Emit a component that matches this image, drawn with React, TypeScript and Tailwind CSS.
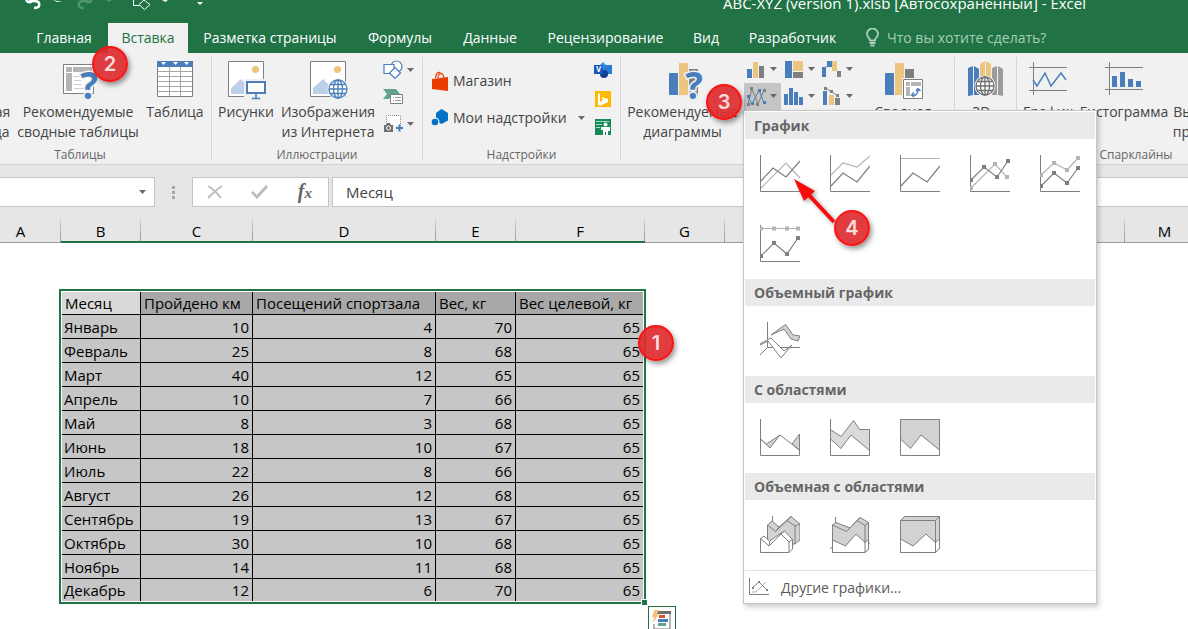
import React from 'react';

type Cell = string | number;

const tabs = [
  { label: 'Главная', width: 'w-[88px]' },
  { label: 'Вставка', width: 'w-[80px]', active: true },
  { label: 'Разметка страницы', width: 'w-[164px]' },
  { label: 'Формулы', width: 'w-[96px]' },
  { label: 'Данные', width: 'w-[84px]' },
  { label: 'Рецензирование', width: 'w-[147px]' },
  { label: 'Вид', width: 'w-[54px]' },
  { label: 'Разработчик', width: 'w-[119px]' },
];

const columns = [
  { name: 'A', width: 'w-20' },
  { name: 'B', width: 'w-20', selected: true },
  { name: 'C', width: 'w-28', selected: true },
  { name: 'D', width: 'w-[183px]', selected: true },
  { name: 'E', width: 'w-20', selected: true },
  { name: 'F', width: 'w-[129px]', selected: true },
  { name: 'G', width: 'w-20' },
  { name: 'H', width: 'w-20' },
  { name: 'I', width: 'w-20' },
  { name: 'J', width: 'w-20' },
  { name: 'K', width: 'w-20' },
  { name: 'L', width: 'w-20' },
  { name: 'M', width: 'w-20' },
];

const headers = ['Месяц', 'Пройдено км', 'Посещений спортзала', 'Вес, кг', 'Вес целевой, кг'];

const rows: Cell[][] = [
  ['Январь', 10, 4, 70, 65],
  ['Февраль', 25, 8, 68, 65],
  ['Март', 40, 12, 65, 65],
  ['Апрель', 10, 7, 66, 65],
  ['Май', 8, 3, 68, 65],
  ['Июнь', 18, 10, 67, 65],
  ['Июль', 22, 8, 66, 65],
  ['Август', 26, 12, 68, 65],
  ['Сентябрь', 19, 13, 67, 65],
  ['Октябрь', 30, 10, 68, 65],
  ['Ноябрь', 14, 11, 68, 65],
  ['Декабрь', 12, 6, 70, 65],
];

const BLUE = '#4a7ebb';
const GOLD = '#ecc580';
const GRAY = '#7f7f7f';
const LIGHT = '#b4b4b4';

/* ---------- shared bits ---------- */

function Caret({ className = 'text-[#6a6a6a]' }: { className?: string }) {
  return (
    <svg width="7" height="4" viewBox="0 0 7 4" className={`shrink-0 ${className}`}>
      <path d="M0 0h7L3.5 4z" fill="currentColor" />
    </svg>
  );
}

function Step({ n, className }: { n: number; className: string }) {
  return (
    <div
      className={`absolute z-40 flex size-9 items-center justify-center rounded-full border-2 border-[#fb1414] bg-[#de2b2f]/92 font-['Inter','Liberation_Sans',sans-serif] text-[20px] font-semibold text-[#fbdcdc] shadow-[2px_3px_5px_rgba(0,0,0,0.4)] ${className}`}
    >
      {n}
    </div>
  );
}

function Globe({ cx, cy, r, color, bg }: { cx: number; cy: number; r: number; color: string; bg: string }) {
  return (
    <g fill="none" stroke={color} strokeWidth="1.3">
      <circle cx={cx} cy={cy} r={r + 1.5} fill={bg} stroke="none" />
      <circle cx={cx} cy={cy} r={r} fill="#fff" />
      <ellipse cx={cx} cy={cy} rx={r / 2} ry={r} />
      <path d={`M${cx} ${cy - r}v${2 * r}M${cx - r} ${cy}h${2 * r}M${cx - r * 0.85} ${cy - r / 2}h${r * 1.7}M${cx - r * 0.85} ${cy + r / 2}h${r * 1.7}`} />
    </g>
  );
}

function Question() {
  return (
    <text
      x="31"
      y="39"
      textAnchor="middle"
      fontSize="37"
      fontWeight="700"
      fill={BLUE}
      stroke="#f1f1f1"
      strokeWidth="3"
      paintOrder="stroke"
      fontFamily="'Open Sans', sans-serif"
    >
      ?
    </text>
  );
}

/* ---------- large ribbon icons ---------- */

function RecommendedPivotIcon() {
  return (
    <svg width="40" height="40" viewBox="0 0 40 40">
      <path d="M5.5 4.5h30v29h-30z" fill="#fff" stroke={GRAY} />
      <path d="M8 7h6v5H8zM15 7h19v5H15zM8 13h6v18H8z" fill={LIGHT} />
      <path d="M16 16.5h8M16 20.5h7M16 24.5h8M16 28.5h10" stroke="#cfcfcf" />
      <Question />
    </svg>
  );
}

function TableIcon() {
  return (
    <svg width="40" height="40" viewBox="0 0 40 40">
      <path d="M2.5 1.5h35v35h-35z" fill="#fff" stroke={GRAY} />
      <path d="M3 11.5h34M3 16.5h34M3 21.5h34M3 26.5h34M3 31.5h34M14.5 7v29M25.5 7v29" stroke="#a6a6a6" />
      <path d="M2 1h36v6H2z" fill={BLUE} />
      <path d="M6 2h5l-2.5 3zM18 2h5l-2.5 3zM29 2h5l-2.5 3z" fill="#fff" />
    </svg>
  );
}

function PictureBase() {
  return (
    <>
      <path d="M2.5 1.5h35v35h-35z" fill="#fff" stroke={GRAY} />
      <circle cx="29.5" cy="9.5" r="3.6" fill="#efc57b" />
      <path d="M5 34v-6l10-9 12 12v3z" fill="#bdd0e8" />
    </>
  );
}

function PicturesIcon() {
  return (
    <svg width="40" height="40" viewBox="0 0 40 40">
      <PictureBase />
      <path d="M18 19h22v21H18z" fill="#f1f1f1" />
      <path d="M21 22h18v11H21z" fill="#fff" stroke={BLUE} strokeWidth="2" />
      <path d="M30 34v4M26 38.5h8" stroke={BLUE} strokeWidth="1.5" />
    </svg>
  );
}

function OnlinePicturesIcon() {
  return (
    <svg width="40" height="40" viewBox="0 0 40 40">
      <PictureBase />
      <Globe cx={30} cy={29} r={9} color={BLUE} bg="#f1f1f1" />
    </svg>
  );
}

function RecommendedChartsIcon() {
  return (
    <svg width="40" height="40" viewBox="0 0 40 40">
      <path d="M6 13h9v22H6z" fill={BLUE} />
      <path d="M16 3h9v32h-9z" fill={GOLD} />
      <path d="M26 9h9v26h-9z" fill={GRAY} />
      <Question />
    </svg>
  );
}

function PivotChartIcon() {
  return (
    <svg width="40" height="40" viewBox="0 0 40 40">
      <path d="M2 13h9v22H2z" fill={BLUE} />
      <path d="M12 3h9v32h-9z" fill={GOLD} />
      <path d="M22 9h9v12h-9z" fill={GRAY} />
      <path d="M19 18h21v22H19z" fill="#f1f1f1" />
      <path d="M20.5 19.5h19v19h-19z" fill="#fff" stroke={GRAY} />
      <path d="M23 22h4v4h-4zM28 22h10v4H28zM23 27h4v9h-4z" fill={LIGHT} />
      <path d="M29 35c4 1 6-1 6-6m-2 2l2-2.5 2.5 2.5M31 32.5L28.5 35l2.5 2" fill="none" stroke={BLUE} strokeWidth="1.5" />
    </svg>
  );
}

function MapIcon() {
  return (
    <svg width="40" height="40" viewBox="0 0 40 40">
      <path d="M4 8l5-2v29l-5 1z" fill={BLUE} />
      <path d="M10 6l5 3v26h-5z" fill={BLUE} />
      <path d="M16 4l5-3v25h-5zM22 1l5 3v22h-5z" fill={GOLD} />
      <path d="M28 8l5-2v29h-5zM34 6l5 3v27l-5-1z" fill="#9b9b9b" />
      <Globe cx={21} cy={26} r={9} color="#6f6f6f" bg="#f1f1f1" />
    </svg>
  );
}

function SparkLineIcon() {
  return (
    <svg width="40" height="40" viewBox="0 0 40 40" fill="none">
      <path d="M5.5 2v33M1 7.5h38M1 30.5h38" stroke={GRAY} />
      <path d="M5 20l4 6 8-13 6 13 10-13 5 7" stroke={BLUE} strokeWidth="1.5" />
    </svg>
  );
}

function SparkColumnIcon() {
  return (
    <svg width="40" height="40" viewBox="0 0 40 40">
      <path d="M5.5 2v33M1 7.5h38M1 29.5h38" stroke={GRAY} />
      <path d="M8 16h5v11H8zM16 12h5v15h-5zM24 19h5v8h-5zM32 21h5v6h-5z" fill={BLUE} />
    </svg>
  );
}

/* ---------- small ribbon icons ---------- */

function ShapesIcon() {
  return (
    <svg width="20" height="20" viewBox="0 0 20 20" fill="#fff" stroke={BLUE} strokeWidth="1.2">
      <circle cx="13.5" cy="6.5" r="5.5" />
      <path d="M1 4.5h10v9H1z" />
      <path d="M12 7.5l5.5 5.5-5.5 5.5-5.5-5.5z" />
    </svg>
  );
}

function SmartArtIcon() {
  return (
    <svg width="20" height="20" viewBox="0 0 20 20">
      <path d="M0 2h13l4 5h-8l-3 5H0l4-5z" fill="#62a58b" />
      <path d="M7.5 7.5h12v9h-12z" fill="#fff" stroke={GRAY} />
      <path d="M10 10.5h1M12 10.5h6M10 13.5h1M12 13.5h6" stroke="#999" />
    </svg>
  );
}

function ScreenshotIcon() {
  return (
    <svg width="20" height="20" viewBox="0 0 20 20">
      <path d="M3.5 10V1.5h14V12" fill="#fff" stroke="#8a8a8a" strokeDasharray="1 1" />
      <path d="M1 11h2l1-2h3l1 2h2v7H1z" fill="#6f6f6f" />
      <circle cx="5.5" cy="14" r="2" fill="#6f6f6f" stroke="#fff" />
      <path d="M13 14h7M16.5 10.5v7" stroke={BLUE} strokeWidth="2" />
    </svg>
  );
}

function StoreIcon() {
  return (
    <svg width="18" height="20" viewBox="0 0 18 20">
      <path d="M1 8l16-2v14L1 18z" fill="#eb3c00" />
      <path d="M4.5 7c0-5 3-6 5-5.5M7 7c0-5 5-6.5 6 0" fill="none" stroke="#eb3c00" strokeWidth="1.2" />
    </svg>
  );
}

function AddinsIcon() {
  return (
    <svg width="18" height="20" viewBox="0 0 18 20" fill="#0072c6">
      <path d="M10.5 1l6.5 4v7.5l-6.5 3.5L5 13V5z" />
      <circle cx="4" cy="14" r="4.5" fill="#f1f1f1" />
      <circle cx="4" cy="14" r="3.3" />
    </svg>
  );
}

function VisioIcon() {
  return (
    <svg width="18" height="18" viewBox="0 0 18 18">
      <path d="M9 0l5 5-5 5-5-5z" fill="#3a96e8" />
      <path d="M10 3h8v9h-8z" fill="#2b7cd3" />
      <circle cx="10" cy="12" r="4" fill="#103f91" />
      <path d="M0 3h9v9H0z" fill="#185abd" />
      <text x="4.5" y="10" textAnchor="middle" fontSize="8" fontWeight="700" fill="#fff" fontFamily="'Open Sans', sans-serif">
        V
      </text>
    </svg>
  );
}

function BingIcon() {
  return (
    <svg width="18" height="18" viewBox="0 0 18 18">
      <path d="M1 1h16v16H1z" fill="#ffb900" />
      <path d="M4 3l2 1v8l3-2-1.5-3L14 9v3l-8 4-2-1.5z" fill="#fff" />
    </svg>
  );
}

function PeopleGraphIcon() {
  return (
    <svg width="18" height="18" viewBox="0 0 18 18">
      <path d="M1 1h16v16H1z" fill="#168a57" />
      <path d="M2 3.5h13M2 6.5h6M2 9.5h4" stroke="#a9d8c2" />
      <circle cx="11.5" cy="6.5" r="2" fill="#fff" />
      <path d="M7 9h9v4h-2v4h-2v-3h-1v3H9v-5H7z" fill="#fff" />
    </svg>
  );
}

const chartIcons = [
  {
    name: 'Гистограмма',
    art: (
      <>
        <path d="M1 10h5v9H1z" fill={BLUE} />
        <path d="M7 3h5v16H7z" fill={GOLD} />
        <path d="M13 7h5v12h-5z" fill={GRAY} />
      </>
    ),
  },
  {
    name: 'Иерархическая',
    art: (
      <>
        <path d="M1 2h7v17H1z" fill={BLUE} />
        <path d="M9 2h10v10H9z" fill={GOLD} />
        <path d="M9 13h10v6H9z" fill={GRAY} />
      </>
    ),
  },
  {
    name: 'Каскадная',
    art: (
      <>
        <path d="M0 8h4v10H0zM5 2h5v6H5z" fill={BLUE} />
        <path d="M4 7.5h2" stroke={BLUE} />
        <path d="M10 2h5v10h-5z" fill={GOLD} />
        <path d="M15 12h4v6h-4z" fill={GRAY} />
      </>
    ),
  },
  {
    name: 'График',
    art: (
      <>
        <path d="M2 18L6 3l6 15 6-14" fill="none" stroke={GRAY} />
        <path d="M2 11l4 7 7-14 5 13" fill="none" stroke={BLUE} />
        <path d="M4 1h3v3H4zM17 3h3v3h-3zM10 17h3v3h-3zM1 17h3v3H1z" fill={GRAY} />
        <path d="M1 9h3v3H1zM5 16h3v3H5zM12 3h3v3h-3zM17 15h3v3h-3z" fill={BLUE} />
      </>
    ),
    open: true,
  },
  {
    name: 'Статистическая',
    art: <path d="M0 8h4v11H0zM5 2h4v17H5zM10 6h4v13h-4zM15 11h4v8h-4z" fill={BLUE} />,
  },
  {
    name: 'Комбинированная',
    art: (
      <>
        <path d="M1 5h4v14H1z" fill={BLUE} />
        <path d="M7 9h5v10H7z" fill={GOLD} />
        <path d="M13 12h5v7h-5z" fill={GRAY} />
        <path d="M3 2l7 4 6 4" fill="none" stroke={GRAY} />
        <path d="M2 1h3v3H2zM8 4h3v3H8zM14 8h3v3h-3z" fill={GRAY} />
      </>
    ),
  },
];

/* ---------- chart gallery ---------- */

function Axis() {
  return <path d="M.5 0v36.5H40" fill="none" stroke={GRAY} />;
}

function Line({ pts, light, dots }: { pts: number[][]; light?: boolean; dots?: boolean }) {
  const color = light ? LIGHT : GRAY;
  return (
    <>
      <polyline points={pts.map((p) => p.join(',')).join(' ')} fill="none" stroke={color} strokeWidth="1.2" />
      {dots && pts.map(([x, y]) => <rect key={`${x}-${y}`} x={x - 2} y={y - 2} width="4" height="4" fill={color} />)}
    </>
  );
}

const gallery = [
  {
    title: 'График',
    items: [
      <>
        <Axis />
        <Line light pts={[[1, 33], [26, 8], [40, 23]]} />
        <Line pts={[[1, 26], [13, 13], [26, 22], [40, 6]]} />
      </>,
      <>
        <Axis />
        <Line light pts={[[1, 20], [13, 8], [27, 12], [40, 1]]} />
        <Line pts={[[1, 31], [13, 18], [27, 27], [40, 11]]} />
      </>,
      <>
        <Axis />
        <Line light pts={[[1, 3.5], [40, 3.5]]} />
        <Line pts={[[1, 31], [13, 18], [27, 27], [40, 11]]} />
      </>,
      <>
        <Axis />
        <Line light dots pts={[[1, 33], [25, 9], [37, 22]]} />
        <Line dots pts={[[1, 25], [14, 12], [27, 22], [38, 6]]} />
      </>,
      <>
        <Axis />
        <Line light dots pts={[[1, 20], [14, 8], [27, 15], [38, 3]]} />
        <Line dots pts={[[1, 31], [14, 18], [27, 28], [38, 13]]} />
      </>,
      <>
        <Axis />
        <Line light dots pts={[[1, 3.5], [14, 3.5], [27, 3.5], [38, 3.5]]} />
        <Line dots pts={[[1, 31], [14, 18], [27, 29], [38, 13]]} />
      </>,
    ],
  },
  {
    title: 'Объемный график',
    items: [
      <g stroke={GRAY} fill="none">
        <path d="M7.5 0v25.5H40M7.5 25.5L0 33" />
        <path d="M11 13L25.5 2.5 33 13l7 1-2 5-7-2-7-10z" fill="#d2d2d2" />
        <path d="M0 22l11-6 13 13 8-6-11 13L8 19l-8 4z" fill="#fff" />
      </g>,
    ],
  },
  {
    title: 'С областями',
    items: [
      <g stroke={GRAY} fill="none">
        <path d="M.5 20l6 5L20 16 10 29zM32 25l7.5-10v16.5z" fill="#d2d2d2" />
        <path d="M.5 0v36.5h39V15M20 16l19.5 15" />
      </g>,
      <g stroke={GRAY} fill="none">
        <path d="M.5 10.5L11 17.5 23.5 1.5l6 9h10v21L21 16 11 29.5.5 20z" fill="#dadada" />
        <path d="M.5 0v36.5h39V31" />
      </g>,
      <g stroke={GRAY}>
        <path d="M.5.5h39v36H.5z" fill="#d2d2d2" />
        <path d="M.5 20L10.5 29.5 21 16l18.5 15v5.5H.5z" fill="#fff" />
      </g>,
    ],
  },
  {
    title: 'Объемная с областями',
    items: [
      <g stroke={GRAY} fill="#d2d2d2" strokeLinejoin="round">
        <path d="M12.5 0v6" />
        <path d="M7.5 9L12 5l7 6L31 .5l9 7.5v16l-5 4H7.5z" />
        <path d="M7.5 9l8 6.5L27 4.5l8 5.5v18M27 4.5L31 .5M35 10l5-2M15.5 15.5L19 11" fill="none" />
        <path d="M.5 22.5L4 20l5.5 5L24.5 15l8 8.5V33L29 36.5H.5z" fill="#fff" />
        <path d="M.5 22.5L9 30l12-12 8 8v10.5M21 18l3.5-3M29 26l3.5-2.5M9 30l1-5" fill="none" />
      </g>,
      <g stroke={GRAY} fill="#d2d2d2" strokeLinejoin="round">
        <path d="M5.5 1v6M0 33l3-3M38 27h2" />
        <path d="M2.5 9L6 6.5 20 12 30 1.5l8.5 5V33L35 36.5H2.5z" />
        <path d="M2.5 24L15.5 30 26 18l9 8.5 3.5-3V33L35 36.5H2.5z" fill="#fff" />
        <path d="M2.5 9l14 6.5L27 4.5l8 5v27M27 4.5l3-3M35 9.5l3.5-3M16.5 15.5L20 12" fill="none" />
      </g>,
      <g stroke={GRAY} fill="#d2d2d2">
        <path d="M.5 4.5l4-4h35V32l-4 4.5H.5z" />
        <path d="M.5 23L13 30l13-12 9.5 8.5 4-3.5v9l-4 4.5H.5z" fill="#fff" />
        <path d="M.5 4.5h35v32M35.5 4.5l4-4" fill="none" />
      </g>,
    ],
  },
];

function ChartMenu() {
  return (
    <div className="absolute top-full -left-px z-30 w-[354px] border border-[#c6c6c6] bg-white p-px shadow-[2px_3px_5px_rgba(0,0,0,0.2)]">
      {gallery.map((section) => (
        <section key={section.title}>
          <h3 className="h-[27px] bg-[#eaeaea] px-[9px] text-[14px] leading-[27px] font-bold text-[#666]">{section.title}</h3>
          <div className="grid grid-cols-5">
            {section.items.map((art, i) => (
              <button key={i} aria-label={`${section.title} ${i + 1}`} className="flex h-[70px] items-center justify-center hover:bg-[#d5e8dc]">
                <svg width="40" height="38" viewBox="0 0 40 38">
                  {art}
                </svg>
              </button>
            ))}
          </div>
        </section>
      ))}
      <button className="flex h-8 w-full items-center gap-3 border-t border-[#e1e1e1] pl-1 text-left text-[14px] text-[#5a5a5a]">
        <svg width="20" height="18" viewBox="0 0 20 18">
          <path d="M.5 0v16.5H20" fill="none" stroke={GRAY} />
          <path d="M3 14h4l6-6 4-4" fill="none" stroke={LIGHT} />
          <path d="M3 10l7-6 8 8" fill="none" stroke={GRAY} />
          <path d="M3 9h2v2H3zM9 3h2v2H9zM17 11h2v2h-2z" fill={GRAY} />
        </svg>
        <span className="pt-0.5">
          Дру<u>г</u>ие графики...
        </span>
      </button>
      <svg width="48" height="48" viewBox="0 0 48 48" className="absolute top-[67px] left-[49px] z-30 drop-shadow-[2px_2px_2px_rgba(0,0,0,0.35)]">
        <path d="M15 16l26 28" stroke="#fb0a0a" strokeWidth="4" />
        <path d="M1 1l21 12-11 10z" fill="#fb0a0a" />
      </svg>
      <Step n={4} className="top-[99px] left-[90px]" />
    </div>
  );
}

/* ---------- ribbon ---------- */

function BigButton({ icon, lines, className }: { icon?: React.ReactNode; lines: string[]; className: string }) {
  return (
    <button className={`flex shrink-0 flex-col items-center text-[14px] leading-5 whitespace-nowrap text-[#444] ${className}`}>
      <span className="mb-0.5 block size-10">{icon}</span>
      {lines.map((line) => (
        <span key={line}>{line}</span>
      ))}
    </button>
  );
}

function Group({ label, className, children }: { label: string; className: string; children: React.ReactNode }) {
  return (
    <div className={`flex shrink-0 flex-col justify-between ${className}`}>
      <div className="flex h-[90px] pt-[7px]">{children}</div>
      <div className="h-[21px] text-center text-[12px] leading-6 text-[#666]">{label}</div>
    </div>
  );
}

function Divider() {
  return <div className="my-1 w-px shrink-0 bg-[#d5d5d5]" />;
}

function Ribbon() {
  return (
    <div className="flex h-28 shrink-0 border-b border-[#d2d2d2] bg-[#f1f1f1]">
      <Group label="Таблицы" className="-ml-[55px] w-[266px] pl-1">
        <BigButton lines={['Сводная', 'таблица']} className="w-[65px]" />
        <BigButton icon={<RecommendedPivotIcon />} lines={['Рекомендуемые', 'сводные таблицы']} className="w-32" />
        <BigButton icon={<TableIcon />} lines={['Таблица']} className="w-[66px]" />
      </Group>
      <Divider />
      <Group label="Иллюстрации" className="w-[210px]">
        <BigButton icon={<PicturesIcon />} lines={['Рисунки']} className="w-[68px]" />
        <BigButton icon={<OnlinePicturesIcon />} lines={['Изображения', 'из Интернета']} className="w-24" />
        <div className="flex flex-col gap-[7px] pl-[7px]">
          <button aria-label="Фигуры" className="flex items-center gap-1"><ShapesIcon /><Caret /></button>
          <button aria-label="SmartArt" className="flex items-center"><SmartArtIcon /></button>
          <button aria-label="Снимок" className="flex items-center gap-1"><ScreenshotIcon /><Caret /></button>
        </div>
      </Group>
      <Divider />
      <Group label="Надстройки" className="w-[197px]">
        <div className="flex w-[171px] flex-col gap-[17px] pt-[11px] pr-[9px] pl-2 text-[14px] leading-5 text-[#444]">
          <button className="flex items-center gap-1 text-left"><StoreIcon />Магазин</button>
          <button className="flex items-center gap-1 text-left whitespace-nowrap">
            <AddinsIcon />
            <span className="flex-1">Мои надстройки</span>
            <Caret />
          </button>
        </div>
        <div className="flex flex-col gap-[10px] pt-[2px]">
          <button aria-label="Visio"><VisioIcon /></button>
          <button aria-label="Bing"><BingIcon /></button>
          <button aria-label="People Graph"><PeopleGraphIcon /></button>
        </div>
      </Group>
      <Divider />
      <Group label="Диаграммы" className="w-[333px]">
        <BigButton icon={<RecommendedChartsIcon />} lines={['Рекомендуемые', 'диаграммы']} className="w-[123px]" />
        <div className="-mt-1 grid w-[114px] grid-cols-3 content-start">
          {chartIcons.map((c) => (
            <div key={c.name} className="relative">
              <button
                aria-label={c.name}
                className={`flex h-[27px] w-[37px] items-center gap-1 pb-px pl-0.5 ${c.open ? 'bg-[#c5c5c5]' : ''}`}
              >
                <svg width="20" height="20" viewBox="0 0 20 20">{c.art}</svg>
                <Caret />
              </button>
              {c.open && <ChartMenu />}
            </div>
          ))}
        </div>
        <BigButton icon={<PivotChartIcon />} lines={['Сводная', 'диаграмма']} className="w-[90px]" />
      </Group>
      <Divider />
      <Group label="Обзоры" className="w-[61px]">
        <BigButton icon={<MapIcon />} lines={['3D-', 'карта']} className="w-[57px]" />
      </Group>
      <Divider />
      <Group label="Спарклайны" className="w-[238px]">
        <BigButton icon={<SparkLineIcon />} lines={['График']} className="w-[62px]" />
        <BigButton icon={<SparkColumnIcon />} lines={['Гистограмма']} className="w-[90px]" />
        <BigButton lines={['Выигрыш/', 'проигрыш']} className="w-20" />
      </Group>
    </div>
  );
}

/* ---------- window ---------- */

function TitleBar() {
  return (
    <div className="flex h-[23px] shrink-0 justify-between overflow-hidden text-white">
      <svg width="220" height="14" viewBox="0 0 220 14" fill="none">
        <path d="M26 0c2 3 5 3 7 0M29 1h5c7 0 7 7 0 7" stroke="#fff" strokeWidth="2.5" />
        <path d="M53 0l4 2h5zM197 2h6l-3 3zM162 0h6l-2.5 2z" fill="#fff" />
        <path d="M92 0c-2 3-5 3-7 0M89 1h-5c-7 0-7 7 0 7" stroke="#4f9370" strokeWidth="2.5" />
        <path d="M106 0h6l-3 2z" fill="#4f9370" />
        <path d="M133.5 0v5.5h6M144 0l6 4.5-5.5 5-5.5-5z" stroke="#fff" />
      </svg>
      <div className="-mt-[7px] mr-[102px] text-[15px] leading-5">ABC-XYZ (version 1).xlsb [Автосохраненный] - Excel</div>
    </div>
  );
}

function TabBar() {
  return (
    <nav className="flex h-[30px] shrink-0 pl-5 text-[14px] text-white">
      {tabs.map((t) => (
        <button
          key={t.label}
          className={`shrink-0 pb-0.5 whitespace-nowrap ${t.width} ${t.active ? 'bg-[#f1f1f1] text-[#217346]' : ''}`}
        >
          {t.label}
        </button>
      ))}
      <label className="flex flex-1 items-center gap-2 pb-0.5 pl-[14px]">
        <svg width="13" height="19" viewBox="0 0 13 19" fill="none" stroke="#a9cdb8" strokeWidth="1.8">
          <path d="M4 12.5C4 10 1 9 1 6a5.5 5.5 0 0 1 11 0c0 3-3 4-3 6.5z" />
          <path d="M3.5 15h6M4.5 17.5h4" />
        </svg>
        <input className="w-48 bg-transparent outline-none placeholder:text-[#a9cdb8]" placeholder="Что вы хотите сделать?" />
      </label>
    </nav>
  );
}

function FormulaBar() {
  return (
    <div className="flex h-[54px] shrink-0 items-start bg-[#e6e6e6] pt-3 text-[#444]">
      <div className="flex h-[30px] w-[155px] items-center justify-end border border-l-0 border-[#c6c6c6] bg-white pr-2">
        <Caret />
      </div>
      <div className="flex h-[30px] w-[37px] flex-col items-center justify-center gap-0.5">
        <span className="size-[3px] bg-[#a6a6a6]" />
        <span className="size-[3px] bg-[#a6a6a6]" />
        <span className="size-[3px] bg-[#a6a6a6]" />
      </div>
      <div className="flex h-[30px] w-[137px] items-center justify-between border border-[#c6c6c6] bg-white pr-4 pl-[14px]">
        <button aria-label="Отмена">
          <svg width="16" height="16" viewBox="0 0 16 16" fill="none" stroke="#bdbdbd" strokeWidth="2">
            <path d="M1 2c5 3 9 7 13 12M15 2C10 5 5 10 1 14" />
          </svg>
        </button>
        <button aria-label="Ввод">
          <svg width="18" height="16" viewBox="0 0 18 16" fill="none" stroke="#bdbdbd" strokeWidth="3">
            <path d="M1 8l5 5L16 2" />
          </svg>
        </button>
        <button className="font-['Liberation_Serif',serif] text-[20px] leading-5 font-bold text-[#666] italic">
          f<span className="text-[15px]">x</span>
        </button>
      </div>
      <input
        aria-label="Строка формул"
        defaultValue="Месяц"
        className="ml-[3px] h-[30px] min-w-0 flex-1 border border-r-0 border-[#c6c6c6] bg-white pl-[13px] text-[15px] outline-none"
      />
    </div>
  );
}

function ColumnHeads() {
  return (
    <div className="flex h-6 shrink-0 bg-[#e6e6e6]">
      <div className="-ml-[19px] flex text-[15px] leading-6 text-black">
        {columns.map((c) => (
          <div
            key={c.name}
            className={`flex shrink-0 border-b ${c.width} ${c.selected ? 'border-b-2 border-[#217346]' : 'border-[#9b9b9b]'}`}
          >
            <span className="flex-1 text-center">{c.name}</span>
            <span className="w-px bg-linear-to-b from-[#d0d0d0] to-[#9b9b9b]" />
          </div>
        ))}
      </div>
    </div>
  );
}

function Sheet() {
  return (
    <div className="flex-1 bg-white pt-[46px] pl-[59px]">
      <div className="relative w-fit border-2 border-[#217346] bg-white p-px">
        <table className="w-[581px] table-fixed border-separate border-spacing-0 text-[15px] leading-[22px] text-black">
          <colgroup>
            <col className="w-[79px]" />
            <col className="w-28" />
            <col className="w-[183px]" />
            <col className="w-20" />
            <col className="w-[127px]" />
          </colgroup>
          <thead>
            <tr>
              {headers.map((h, i) => (
                <th
                  key={h}
                  className={`h-[23px] border-b border-black p-0 pl-[3px] text-left font-normal whitespace-nowrap ${i < 4 ? 'border-r' : ''} ${i === 0 ? 'bg-[#d9d9d9]' : 'bg-[#a8a8a8]'}`}
                >
                  {h}
                </th>
              ))}
            </tr>
          </thead>
          <tbody>
            {rows.map((row, r) => (
              <tr key={r} className={r === rows.length - 1 ? 'h-[22px]' : 'h-6'}>
                {row.map((v, i) => (
                  <td
                    key={i}
                    className={`border-black bg-[#c6c6c6] p-0 ${i < 4 ? 'border-r' : ''} ${r < rows.length - 1 ? 'border-b' : ''} ${i === 0 ? 'pl-0.5' : 'pr-[3px] text-right'}`}
                  >
                    {v}
                  </td>
                ))}
              </tr>
            ))}
          </tbody>
        </table>
        <span className="absolute -right-[4px] -bottom-[4px] size-[7px] border border-white bg-[#217346]" />
        <Step n={1} className="top-[34px] -right-[30px]" />
        <button aria-label="Быстрый анализ" className="absolute top-[315px] left-[587px] size-7 border border-[#217346] bg-white">
          <svg width="26" height="26" viewBox="0 0 26 26">
            <path d="M7 5h14v17H5V17" fill="none" stroke="#6f6f6f" />
            <path d="M8 4h14v3H8z" fill="#6f6f6f" />
            <path d="M10 8h6v3h-6z" fill="#d9532c" />
            <path d="M9 12h10v3H9z" fill={BLUE} />
            <path d="M9 16h8v3H9z" fill="#5fa58c" />
            <path d="M5 3h5L8 7h2L4 16l1-6H3z" fill="#efc57b" />
          </svg>
        </button>
      </div>
    </div>
  );
}

export default function App() {
  return (
    <div className="relative flex h-screen flex-col overflow-hidden bg-white font-['Open_Sans','Noto_Sans',sans-serif]">
      <header className="bg-[#217346]">
        <TitleBar />
        <TabBar />
      </header>
      <Ribbon />
      <FormulaBar />
      <ColumnHeads />
      <Sheet />
      <Step n={2} className="top-[46px] left-[92px]" />
      <Step n={3} className="top-[84px] left-[706px]" />
    </div>
  );
}
